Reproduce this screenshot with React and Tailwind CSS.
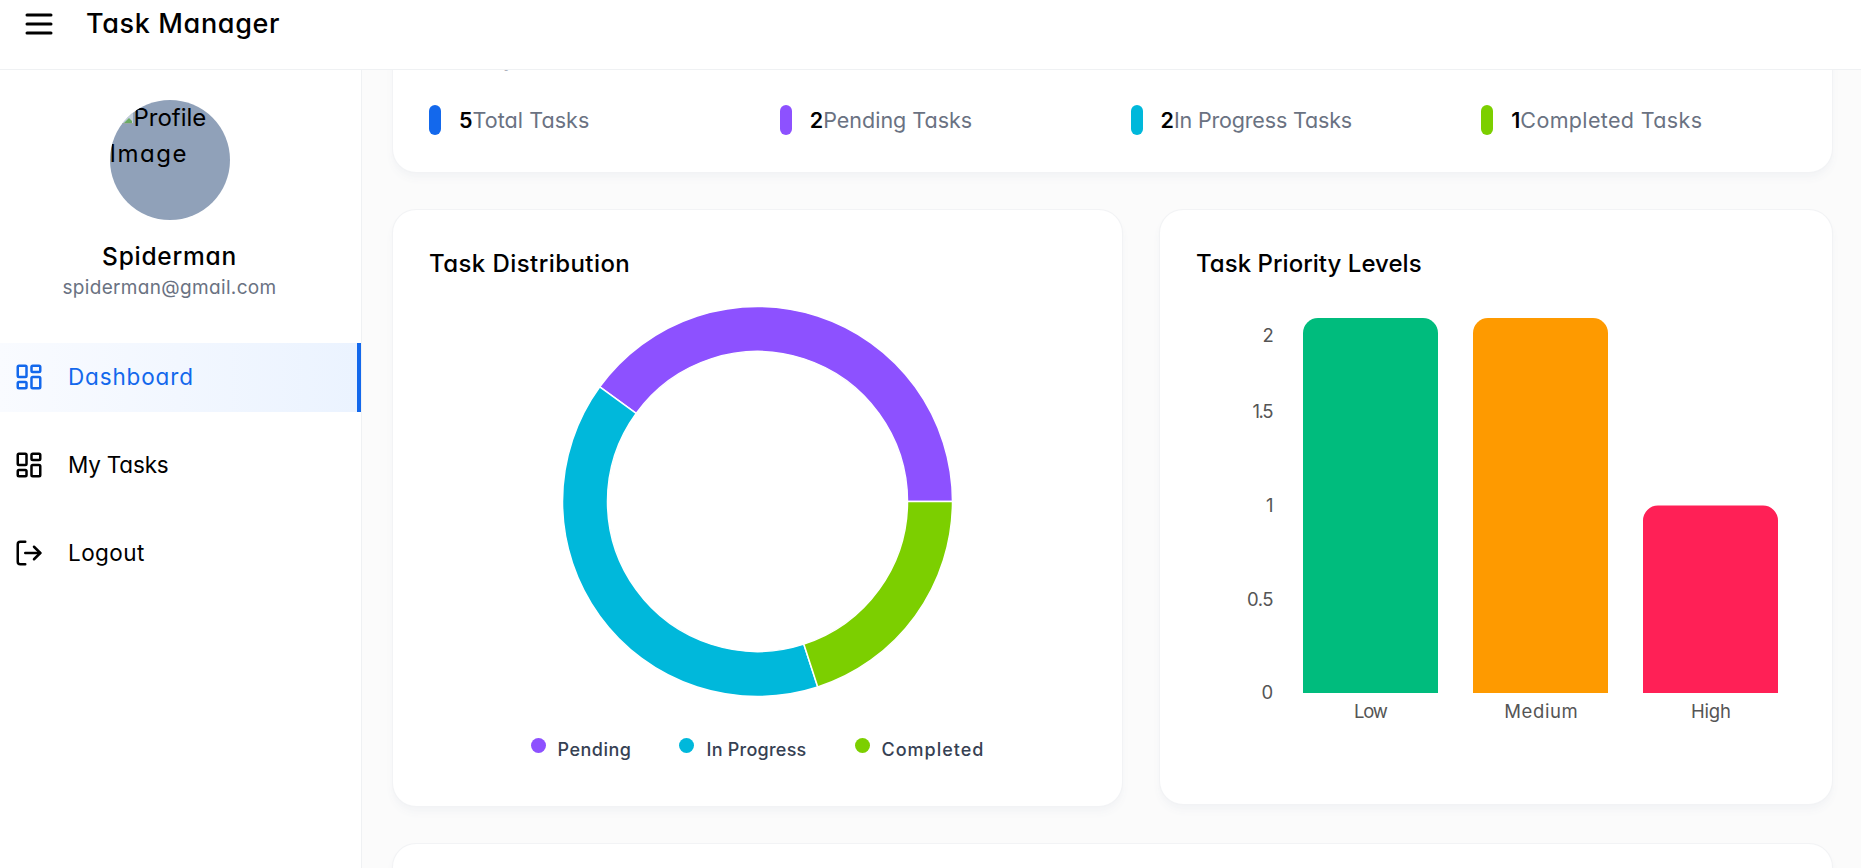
import { LuLayoutDashboard, LuLogOut } from 'react-icons/lu';
import { HiOutlineMenu } from 'react-icons/hi';

const card =
  'bg-white rounded-3xl border border-gray-200/50 shadow-[0_6px_9px_-1px_#f3f4f6,0_3px_6px_-3px_#f3f4f6]';

const stats = [
  { n: '5', label: 'Total Tasks', bar: 'bg-[#1368ec]', ls: 'tracking-[0.05px]' },
  { n: '2', label: 'Pending Tasks', bar: 'bg-[#8d51ff]', ls: 'tracking-[0px]' },
  { n: '2', label: 'In Progress Tasks', bar: 'bg-[#00b8db]', ls: 'tracking-[-0.17px]' },
  { n: '1', label: 'Completed Tasks', bar: 'bg-[#7ccf00]', ls: 'tracking-[0.35px]' },
];

const slices = [
  { from: 0, to: 144, color: '#8d51ff' },
  { from: 144, to: 288, color: '#00b8db' },
  { from: 288, to: 360, color: '#7ccf00' },
];

const legend = [
  { label: 'Pending', dot: 'bg-[#8d51ff]', ls: 'tracking-[0.5px]' },
  { label: 'In Progress', dot: 'bg-[#00b8db]', ls: 'tracking-[0.25px]' },
  { label: 'Completed', dot: 'bg-[#7ccf00]', ls: 'tracking-[1px]' },
];

const bars = [
  { x: 107, top: 10, color: '#00bc7d', label: 'Low', w: 34 },
  { x: 277, top: 10, color: '#fe9a00', label: 'Medium', w: 73.5 },
  { x: 447, top: 197.5, color: '#ff2056', label: 'High', w: 40 },
];

const ticks = [
  { label: '2', y: 34, w: 11 },
  { label: '1.5', y: 110, w: 21 },
  { label: '1', y: 203.5, w: 7.5 },
  { label: '0.5', y: 298, w: 26.5 },
  { label: '0', y: 391, w: 12 },
];

function point(r, deg) {
  const a = (deg * Math.PI) / 180;
  return `${195.5 + r * Math.cos(a)} ${195.5 - r * Math.sin(a)}`;
}

function arc({ from, to }) {
  return `M${point(195, from)}A195 195 0 0 0 ${point(195, to)}L${point(150, to)}A150 150 0 0 1 ${point(150, from)}Z`;
}

function barPath(x, top) {
  return `M${x} 385V${top + 15}a15 15 0 0 1 15 -15h105a15 15 0 0 1 15 15V385Z`;
}

function Header() {
  return (
    <header className="flex h-[70px] shrink-0 items-start gap-[29px] border-b border-gray-200/60 bg-white pt-1.5 pl-[21px]">
      <HiOutlineMenu className="size-9" />
      <h1 className="text-[27px] leading-9 font-medium tracking-[0.65px]">Task Manager</h1>
    </header>
  );
}

function Avatar() {
  return (
    <div className="size-[120px] overflow-hidden rounded-full bg-[#90a1b9] text-[24px] leading-9">
      <div className="flex items-start">
        <svg className="size-6 shrink-0" viewBox="0 0 24 24">
          <path d="M1 1h15l7 7v16H1z" fill="#c3cfdd" />
          <path d="M13 24l6-6 3 3v3z" fill="#6bab63" />
          <path d="M1 23h22v1H1z" fill="#9aa5a5" />
        </svg>
        <span>Profile</span>
      </div>
      <div className="tracking-[1.5px]">Image</div>
    </div>
  );
}

function Sidebar() {
  return (
    <aside className="flex w-[362px] shrink-0 flex-col border-r border-gray-200/60 bg-white pt-[30px]">
      <div className="flex w-[339px] flex-col items-center">
        <Avatar />
        <h5 className="mt-[18px] text-[24.5px] leading-9 font-medium tracking-[0.75px]">Spiderman</h5>
        <p className="text-[19px] leading-[27px] tracking-[0.33px] text-[#6a7282]">spiderman@gmail.com</p>
      </div>
      <nav className="mt-[42px] flex flex-col gap-[19px] text-[22.5px]">
        <a className="flex h-[69px] items-center gap-6 border-r-4 border-[#1368ec] bg-linear-to-r from-[#f9fbff] to-[#ebf3ff] pb-px pl-3.5 text-[#1368ec]">
          <LuLayoutDashboard className="size-[30px]" />
          <span className="tracking-[0.85px]">Dashboard</span>
        </a>
        <a className="flex h-[69px] items-center gap-6 pb-px pl-3.5">
          <LuLayoutDashboard className="size-[30px]" />
          <span className="tracking-[-0.2px]">My Tasks</span>
        </a>
        <a className="flex h-[69px] items-center gap-6 pb-px pl-3.5">
          <LuLogOut className="size-[30px]" />
          <span className="tracking-[0.45px]">Logout</span>
        </a>
      </nav>
    </aside>
  );
}

function Stats() {
  return (
    <section className={`${card} -mt-8 h-[135px] shrink-0 px-9`}>
      <p className="h-[66px] pl-[74px] text-[22px] leading-[38px] text-[#99a1af]">y</p>
      <div className="grid grid-cols-4 gap-9">
        {stats.map((s) => (
          <div key={s.label} className="flex h-[30px] items-center gap-[18px]">
            <span className={`h-[30px] w-3 rounded-full ${s.bar}`}></span>
            <p className="text-[21.5px] whitespace-nowrap text-[#6a7282]">
              <span className="font-semibold text-black">{s.n}</span>
              <span className={s.ls}>{s.label}</span>
            </p>
          </div>
        ))}
      </div>
    </section>
  );
}

function Distribution() {
  return (
    <section className={`${card} h-[598px] w-[731px] px-9 pt-9`}>
      <h5 className="text-[24px] leading-9 font-medium tracking-[0.43px]">Task Distribution</h5>
      <div className="mt-6 flex justify-center">
        <svg className="size-[392px]" viewBox="0 0 392 392">
          {slices.map((s) => (
            <path key={s.color} d={arc(s)} fill={s.color} stroke="#fff" strokeWidth="1.5" />
          ))}
        </svg>
      </div>
      <div className="mt-[39px] flex h-6 items-start justify-center gap-12 text-[18px] leading-[25px] font-medium text-[#364153]">
        {legend.map((l) => (
          <div key={l.label} className="flex gap-3">
            <span className={`mt-px size-[15px] rounded-full ${l.dot}`}></span>
            <span className={l.ls}>{l.label}</span>
          </div>
        ))}
      </div>
    </section>
  );
}

function Priority() {
  return (
    <section className={`${card} h-[596px] w-[674px] px-9 pt-9`}>
      <h5 className="text-[24px] leading-9 font-medium tracking-[0.03px]">Task Priority Levels</h5>
      <svg className="mt-[26px] h-[430px] w-[600px]" viewBox="0 0 600 430" fontSize="18.5" fill="#555">
        {ticks.map((t) => (
          <text key={t.label} x={77.5 - t.w} y={t.y} textLength={t.w}>{t.label}</text>
        ))}
        {bars.map((b) => (
          <g key={b.label}>
            <path d={barPath(b.x, b.top)} fill={b.color} />
            <text x={b.x + 68 - b.w / 2} y="410" textLength={b.w}>{b.label}</text>
          </g>
        ))}
      </svg>
    </section>
  );
}

export default function App() {
  return (
    <div className="flex h-[868px] w-full flex-col overflow-hidden bg-[#fbfbfb] font-['Inter','Noto_Sans',sans-serif] text-black [font-feature-settings:'cv11','ss03']">
      <Header />
      <div className="flex min-h-0 flex-1">
        <Sidebar />
        <main className="flex min-w-0 flex-1 flex-col overflow-hidden pr-7 pl-[30px]">
          <Stats />
          <div className="mt-9 flex shrink-0 items-start justify-between">
            <Distribution />
            <Priority />
          </div>
          <section className={`${card} mt-9 h-[200px] shrink-0`}></section>
        </main>
      </div>
    </div>
  );
}
